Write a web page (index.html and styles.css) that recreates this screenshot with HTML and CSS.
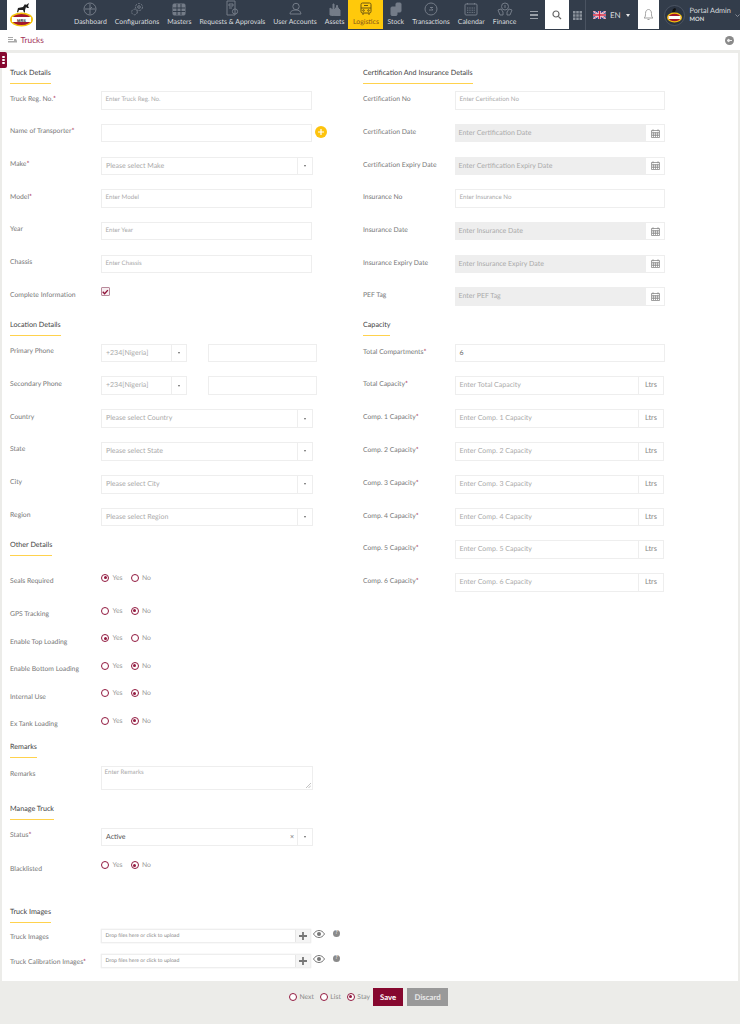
FILE: index.html
```html
<!DOCTYPE html>
<html lang="en">
<head>
<meta charset="utf-8">
<title>Trucks</title>
<link rel="stylesheet" href="styles.css">
</head>
<body>
<header class="topbar">
  <div class="logo">
    <svg width="29" height="29" viewBox="0 0 29 29"><path d="M10 12l1-4 5-1 2-3 1 1 3-2-1 3 1 2-2 0-1-1-1 3v2.500l-1 0-1-2.500-4 0-1 2.500z" fill="#222"/><ellipse cx="14.500" cy="19.500" rx="11.500" ry="7" fill="#f4c20d"/><ellipse cx="14.500" cy="19.500" rx="9.500" ry="5.600" fill="#a3162e"/><rect x="5" y="17" width="19" height="5" fill="#fff"/><text x="14.500" y="21.500" class="logo-text" text-anchor="middle">MRS</text></svg>
  </div>
  <nav class="menu">
    <div class="menu-item"><svg width="14" height="14" viewBox="0 0 14 14" class="ico"><circle cx="7" cy="7" r="6"/><path d="M7 2v10M2 7h10M7 7l2-2"/></svg><span>Dashboard</span></div>
    <div class="menu-item"><svg width="14" height="14" viewBox="0 0 14 14" class="ico"><circle cx="9" cy="5" r="3.500" stroke-dasharray="2 1"/><circle cx="9" cy="5" r="1.300"/><circle cx="4.500" cy="10" r="2.800" stroke-dasharray="2 1"/></svg><span>Configurations</span></div>
    <div class="menu-item"><svg width="14" height="14" viewBox="0 0 14 14" class="ico ico-fill"><rect x="1" y="2" width="12" height="11" rx="1"/><path d="M1 6h12M1 9.500h12M5 2v11M9 2v11" class="ln"/></svg><span>Masters</span></div>
    <div class="menu-item"><svg width="14" height="16" viewBox="0 0 14 16" class="ico"><path d="M2 1h8v14H2z"/><path d="M4 4h4v2H4zM4 8h3"/><circle cx="10" cy="11.500" r="2.600"/></svg><span>Requests &amp; Approvals</span></div>
    <div class="menu-item"><svg width="14" height="14" viewBox="0 0 14 14" class="ico"><circle cx="8" cy="4.500" r="3.200"/><path d="M2 12c0-3 3-4 6-4s4.500 1 5 4z"/></svg><span>User Accounts</span></div>
    <div class="menu-item"><svg width="14" height="14" viewBox="0 0 14 14" class="ico ico-fill"><path d="M2 13V6l3 2V2h1v6l2-2 1-3 1 3 2 2v7z"/></svg><span>Assets</span></div>
    <div class="menu-item active"><svg width="14" height="14" viewBox="0 0 14 14" class="ico-dark"><rect x="2" y="1" width="10" height="10" rx="1.500"/><path d="M2 6h10M5 3.500h4M4 11v2M10 11v2"/><circle cx="4.500" cy="8.500" r=".8"/><circle cx="9.500" cy="8.500" r=".8"/></svg><span>Logistics</span></div>
    <div class="menu-item"><svg width="14" height="14" viewBox="0 0 14 14" class="ico ico-fill"><rect x="2" y="5" width="6" height="8.500" rx="1"/><rect x="7" y="1" width="5" height="9" rx="1"/></svg><span>Stock</span></div>
    <div class="menu-item"><svg width="14" height="14" viewBox="0 0 14 14" class="ico"><circle cx="7" cy="7" r="6"/><path d="M5 8h4l-1.500-1.500M9 5.500H6"/></svg><span>Transactions</span></div>
    <div class="menu-item"><svg width="14" height="14" viewBox="0 0 14 14" class="ico"><rect x="1" y="2" width="12" height="11" rx="1"/><path d="M3.500 1v2M10.500 1v2M3 6h8M3 8.200h8M3 10.400h8" stroke-dasharray="1 .7"/></svg><span>Calendar</span></div>
    <div class="menu-item"><svg width="16" height="14" viewBox="0 0 16 14" class="ico"><circle cx="8" cy="4.500" r="3.500"/><path d="M8 3v3M1 8l3-1 2 3v3H3zM15 8l-3-1-2 3v3h3z"/></svg><span>Finance</span></div>
  </nav>
  <div class="burger"><i></i><i></i><i></i></div>
  <div class="white-box search"><svg width="10" height="10" viewBox="0 0 10 10" class="ico-search"><circle cx="4" cy="4" r="3"/><path d="M6.300 6.300L9 9"/></svg></div>
  <div class="apps"><svg width="9" height="9" viewBox="0 0 9 9" class="apps-svg"><path d="M0 0h2.500v2.500H0zM3.250 0h2.500v2.500h-2.500zM6.500 0H9v2.500H6.500zM0 3.250h2.500v2.500H0zM3.250 3.250h2.500v2.500h-2.500zM6.500 3.250H9v2.500H6.500zM0 6.500h2.500V9H0zM3.250 6.500h2.500V9h-2.500zM6.500 6.500H9V9H6.500z"/></svg></div>
  <div class="lang">
    <svg width="13" height="8" viewBox="0 0 13 8"><rect width="13" height="8" fill="#2b3f87"/><path d="M0 0l13 8M13 0L0 8" stroke="#fff" stroke-width="1.600"/><path d="M0 0l13 8M13 0L0 8" stroke="#d0233f" stroke-width=".6"/><path d="M6.500 0v8M0 4h13" stroke="#fff" stroke-width="2.600"/><path d="M6.500 0v8M0 4h13" stroke="#d0233f" stroke-width="1.500"/></svg>
    <span>EN</span><b class="caret-white"></b>
  </div>
  <div class="white-box bell"><svg width="11" height="13" viewBox="0 0 11 13" class="ico-bell"><path d="M1 10c1.500-1 1.500-2.500 1.500-4.500C2.500 3 3.800 1.500 5.500 1.500S8.500 3 8.500 5.500c0 2 0 3.500 1.500 4.500z"/><path d="M4.500 11.500h2"/></svg></div>
  <div class="user">
    <svg width="21" height="21" viewBox="0 0 21 21" class="avatar"><circle cx="10.500" cy="10.500" r="10" fill="#2b3442" stroke="#596270" stroke-width=".7"/><path d="M8 7l1-3 2-1 1 1-1 3z" fill="#111"/><ellipse cx="10.500" cy="12.500" rx="7.500" ry="5" fill="#f4c20d"/><ellipse cx="10.500" cy="12.500" rx="6" ry="3.800" fill="#a3162e"/><rect x="4.500" y="11" width="12" height="3" fill="#fff"/></svg>
    <div class="user-text"><span class="user-name">Portal Admin</span><span class="user-org">MON</span></div>
    <svg width="5" height="3" viewBox="0 0 5 3" class="chev"><path d="M.5.500l2 2 2-2"/></svg>
  </div>
</header>

<div class="crumb">
  <svg width="9" height="6" viewBox="0 0 9 6" class="crumb-ico"><path d="M0 0h5v1H0zM0 2h5v1H0zM0 4h6V2h2l1 2v1.500H0z"/></svg>
  <span class="crumb-title">Trucks</span>
  <svg width="9" height="9" viewBox="0 0 9 9" class="crumb-back"><circle cx="4.500" cy="4.500" r="4.500" fill="#8a8a8a"/><path d="M2 4.500h5M2 4.500l2-1.500v3z" stroke="#eee" stroke-width="1" fill="#eee"/></svg>
</div>

<main class="card">
  <div class="side-tab"><i></i><i></i><i></i></div>
  <div class="col col-left">
    <section class="sec sec-truck">
      <h2 class="head">Truck Details</h2>
      <div class="row"><label>Truck Reg. No.<em>*</em></label><div class="box ph">Enter Truck Reg. No.</div></div>
      <div class="row"><label>Name of Transporter<em>*</em></label><div class="box ph"></div><span class="add"><svg width="6" height="6" viewBox="0 0 6 6"><path d="M3 0v6M0 3h6" stroke="#fff" stroke-width="1.200"/></svg></span></div>
      <div class="row"><label>Make<em>*</em></label><div class="sel"><span class="sel-text">Please select Make</span><span class="sel-arrow"><b></b></span></div></div>
      <div class="row"><label>Model<em>*</em></label><div class="box ph">Enter Model</div></div>
      <div class="row"><label>Year</label><div class="box ph">Enter Year</div></div>
      <div class="row"><label>Chassis</label><div class="box ph">Enter Chassis</div></div>
      <div class="row"><label class="label-low">Complete Information</label><span class="check"><svg width="7" height="6" viewBox="0 0 7 6"><path d="M.8 2.800l2 2L6.300 1" fill="none" stroke="#8f1238" stroke-width="1.500"/></svg></span></div>
    </section>
    <section class="sec sec-location">
      <h2 class="head">Location Details</h2>
      <div class="row row-b"><label>Primary Phone</label><div class="sel sel-phone"><span class="sel-text">+234[Nigeria]</span><span class="sel-arrow"><b></b></span></div><div class="box phone"></div></div>
      <div class="row row-b"><label>Secondary Phone</label><div class="sel sel-phone"><span class="sel-text">+234[Nigeria]</span><span class="sel-arrow"><b></b></span></div><div class="box phone"></div></div>
      <div class="row row-b"><label>Country</label><div class="sel"><span class="sel-text">Please select Country</span><span class="sel-arrow"><b></b></span></div></div>
      <div class="row row-b"><label>State</label><div class="sel"><span class="sel-text">Please select State</span><span class="sel-arrow"><b></b></span></div></div>
      <div class="row row-b"><label>City</label><div class="sel"><span class="sel-text">Please select City</span><span class="sel-arrow"><b></b></span></div></div>
      <div class="row row-b"><label>Region</label><div class="sel"><span class="sel-text">Please select Region</span><span class="sel-arrow"><b></b></span></div></div>
    </section>
    <section class="sec sec-other">
      <h2 class="head head-other">Other Details</h2>
      <div class="row-radio tall"><label>Seals Required</label><div class="radios"><span class="radio on"></span><span class="rt">Yes</span><span class="radio"></span><span class="rt">No</span></div></div>
      <div class="row-radio"><label>GPS Tracking</label><div class="radios"><span class="radio"></span><span class="rt">Yes</span><span class="radio on"></span><span class="rt">No</span></div></div>
      <div class="row-radio"><label>Enable Top Loading</label><div class="radios"><span class="radio on"></span><span class="rt">Yes</span><span class="radio"></span><span class="rt">No</span></div></div>
      <div class="row-radio"><label>Enable Bottom Loading</label><div class="radios"><span class="radio"></span><span class="rt">Yes</span><span class="radio on"></span><span class="rt">No</span></div></div>
      <div class="row-radio"><label>Internal Use</label><div class="radios"><span class="radio"></span><span class="rt">Yes</span><span class="radio on"></span><span class="rt">No</span></div></div>
      <div class="row-radio"><label>Ex Tank Loading</label><div class="radios"><span class="radio"></span><span class="rt">Yes</span><span class="radio on"></span><span class="rt">No</span></div></div>
    </section>
    <section class="sec sec-remarks">
      <h2 class="head">Remarks</h2>
      <div class="row"><label class="label-low">Remarks</label><div class="area ph">Enter Remarks<svg width="5" height="5" viewBox="0 0 5 5" class="grip"><path d="M0 5l5-5M2.500 5L5 2.500"/></svg></div></div>
    </section>
    <section class="sec sec-manage">
      <h2 class="head">Manage Truck</h2>
      <div class="row"><label>Status<em>*</em></label><div class="sel"><span class="sel-text sel-value">Active</span><span class="sel-x">×</span><span class="sel-arrow"><b></b></span></div></div>
      <div class="row-radio"><label>Blacklisted</label><div class="radios"><span class="radio"></span><span class="rt">Yes</span><span class="radio on"></span><span class="rt">No</span></div></div>
    </section>
    <section class="sec sec-images">
      <h2 class="head head-images">Truck Images</h2>
      <div class="row-up"><label>Truck Images</label><div class="upload"><span class="drop">Drop files here or click to upload</span><span class="plus"><svg width="8" height="8" viewBox="0 0 8 8"><path d="M4 0v8M0 4h8" stroke="#777" stroke-width="1.800"/></svg></span></div><svg width="12" height="8" viewBox="0 0 12 8" class="eye"><path d="M.5 4C2 1.500 4 .5 6 .5S10 1.500 11.500 4C10 6.500 8 7.500 6 7.500S2 6.500.5 4z" fill="none" stroke="#777" stroke-width="1"/><circle cx="6" cy="4" r="2" fill="#777"/></svg><span class="help">?</span></div>
      <div class="row-up"><label>Truck Calibration Images<em>*</em></label><div class="upload"><span class="drop">Drop files here or click to upload</span><span class="plus"><svg width="8" height="8" viewBox="0 0 8 8"><path d="M4 0v8M0 4h8" stroke="#777" stroke-width="1.800"/></svg></span></div><svg width="12" height="8" viewBox="0 0 12 8" class="eye"><path d="M.5 4C2 1.500 4 .5 6 .5S10 1.500 11.500 4C10 6.500 8 7.500 6 7.500S2 6.500.5 4z" fill="none" stroke="#777" stroke-width="1"/><circle cx="6" cy="4" r="2" fill="#777"/></svg><span class="help">?</span></div>
    </section>
  </div>

  <div class="col col-right">
    <section class="sec sec-truck">
      <h2 class="head">Certification And Insurance Details</h2>
      <div class="row"><label>Certification No</label><div class="box ph">Enter Certification No</div></div>
      <div class="row"><label>Certification Date</label><div class="date"><span class="date-text">Enter Certification Date</span><span class="cal"><svg width="9" height="9" viewBox="0 0 9 9"><use href="#cal-ico"/></svg></span></div></div>
      <div class="row"><label>Certification Expiry Date</label><div class="date"><span class="date-text">Enter Certification Expiry Date</span><span class="cal"><svg width="9" height="9" viewBox="0 0 9 9"><use href="#cal-ico"/></svg></span></div></div>
      <div class="row"><label>Insurance No</label><div class="box ph">Enter Insurance No</div></div>
      <div class="row"><label>Insurance Date</label><div class="date"><span class="date-text">Enter Insurance Date</span><span class="cal"><svg width="9" height="9" viewBox="0 0 9 9"><use href="#cal-ico"/></svg></span></div></div>
      <div class="row"><label>Insurance Expiry Date</label><div class="date"><span class="date-text">Enter Insurance Expiry Date</span><span class="cal"><svg width="9" height="9" viewBox="0 0 9 9"><use href="#cal-ico"/></svg></span></div></div>
      <div class="row"><label>PEF Tag</label><div class="date"><span class="date-text">Enter PEF Tag</span><span class="cal"><svg width="9" height="9" viewBox="0 0 9 9"><use href="#cal-ico"/></svg></span></div></div>
    </section>
    <section class="sec">
      <h2 class="head">Capacity</h2>
      <div class="row row-b"><label>Total Compartments<em>*</em></label><div class="box val">6</div></div>
      <div class="row row-b"><label>Total Capacity<em>*</em></label><div class="unit"><span class="unit-text">Enter Total Capacity</span><span class="ltrs">Ltrs</span></div></div>
      <div class="row row-b"><label>Comp. 1 Capacity<em>*</em></label><div class="unit"><span class="unit-text">Enter Comp. 1 Capacity</span><span class="ltrs">Ltrs</span></div></div>
      <div class="row row-b"><label>Comp. 2 Capacity<em>*</em></label><div class="unit"><span class="unit-text">Enter Comp. 2 Capacity</span><span class="ltrs">Ltrs</span></div></div>
      <div class="row row-b"><label>Comp. 3 Capacity<em>*</em></label><div class="unit"><span class="unit-text">Enter Comp. 3 Capacity</span><span class="ltrs">Ltrs</span></div></div>
      <div class="row row-b"><label>Comp. 4 Capacity<em>*</em></label><div class="unit"><span class="unit-text">Enter Comp. 4 Capacity</span><span class="ltrs">Ltrs</span></div></div>
      <div class="row row-b"><label>Comp. 5 Capacity<em>*</em></label><div class="unit"><span class="unit-text">Enter Comp. 5 Capacity</span><span class="ltrs">Ltrs</span></div></div>
      <div class="row row-b"><label>Comp. 6 Capacity<em>*</em></label><div class="unit"><span class="unit-text">Enter Comp. 6 Capacity</span><span class="ltrs">Ltrs</span></div></div>
    </section>
  </div>
</main>

<footer class="actions">
  <span class="radio"></span><span class="rt rt-foot">Next</span>
  <span class="radio"></span><span class="rt rt-foot">List</span>
  <span class="radio on"></span><span class="rt rt-foot">Stay</span>
  <span class="btn btn-save">Save</span>
  <span class="btn btn-discard">Discard</span>
</footer>

<svg width="0" height="0" class="defs"><defs><g id="cal-ico"><path d="M.5 1.500h8v7h-8zM2 .3v2M7 .3v2" fill="none" stroke="#888" stroke-width=".8"/><path d="M1 3.500h7M1 5h7M1 6.500h7M2.500 3.500v4.500M4.500 3.500v4.500M6.500 3.500v4.500" stroke="#888" stroke-width=".7"/></g></defs></svg>
</body>
</html>
```
FILE: styles.css
```css
* { box-sizing: border-box; }
html, body { margin: 0; padding: 0; }
body {
  width: 740px;
  height: 1024px;
  overflow: hidden;
  background: #ecece9;
  font-family: Lato, "Open Sans", sans-serif;
  color: #777;
  text-rendering: geometricPrecision;
}

/* top bar */
.topbar {
  display: flex;
  align-items: stretch;
  height: 30px;
  background: #333d4b;
}
.logo {
  width: 29px;
  margin-left: 7px;
  background: #fff;
}
.logo svg { display: block; }
.logo-text { font: 700 4px "Liberation Sans", sans-serif; fill: #222; }
.menu {
  display: flex;
  margin-left: 34px;
}
.menu-item {
  display: flex;
  flex-direction: column;
  align-items: center;
  justify-content: flex-end;
  padding: 0 4px 2.500px;
  height: 29px;
  font-size: 6.900px;
  line-height: 9px;
  color: #d9dcdf;
  white-space: nowrap;
}
.menu-item svg { margin-bottom: 1.500px; }
.ico { fill: none; stroke: #747c88; stroke-width: 1; }
.ico-fill { fill: #747c88; }
.ico-fill .ln { stroke: #333d4b; }
.ico-dark { fill: none; stroke: #6b5510; stroke-width: 1; }
.menu-item.active {
  background: #ffc90b;
  color: #86551c;
  padding: 0 4.500px 2.500px;
}
.burger {
  display: flex;
  flex-direction: column;
  justify-content: center;
  gap: 2px;
  width: 8px;
  margin: 0 7px 0 auto;
}
.burger i { display: block; height: 1.300px; background: #9aa0a8; }
.white-box {
  display: flex;
  align-items: center;
  justify-content: center;
  background: #fff;
  height: 29px;
}
.search { width: 24px; }
.ico-search { fill: none; stroke: #666; stroke-width: 1.200; }
.apps {
  display: flex;
  align-items: center;
  justify-content: center;
  width: 17px;
  border-right: 1px solid #4a5361;
}
.apps-svg { fill: #8a919b; }
.lang {
  display: flex;
  align-items: center;
  width: 52px;
  padding-left: 7px;
  font-size: 8px;
  color: #d9dcdf;
}
.lang span { margin-left: 4px; }
.caret-white {
  margin-left: 5px;
  border: 2.500px solid transparent;
  border-top: 3px solid #e8e8e8;
  border-bottom: 0;
}
.bell { width: 21px; }
.ico-bell { fill: none; stroke: #999; stroke-width: .9; }
.user {
  display: flex;
  align-items: center;
  width: 81px;
  padding-left: 5px;
}
.avatar { flex: none; }
.user-text {
  display: flex;
  flex-direction: column;
  margin-left: 4.500px;
  line-height: 9px;
  white-space: nowrap;
}
.user-name { font-size: 7.300px; color: #d9dcdf; }
.user-org { font-size: 5.800px; font-weight: 700; color: #d9dcdf; }
.chev { margin-left: 4px; fill: none; stroke: #9aa0a8; stroke-width: .8; flex: none; }

/* breadcrumb */
.crumb {
  display: flex;
  align-items: center;
  height: 20px;
  padding: 0 6px 0 8px;
  background: #fff;
}
.crumb-ico { fill: #aaa; }
.crumb-title {
  margin-left: 3.500px;
  font-size: 8.300px;
  color: #a3335a;
  flex: 1;
}

/* card */
.card {
  position: relative;
  display: flex;
  height: 928px;
  margin: 3px 2px 0;
  padding: 14.600px 0 0 8px;
  background: #fff;
}
.side-tab {
  position: absolute;
  left: -2px;
  top: -1px;
  display: flex;
  flex-direction: column;
  align-items: center;
  justify-content: center;
  gap: 1.200px;
  width: 7px;
  height: 16px;
  background: #86082f;
  border-radius: 0 2px 2px 0;
}
.side-tab i { display: block; width: 2.200px; height: 2.200px; border-radius: 50%; background: #fff; }
.col-left { width: 353px; flex: none; }
.col-right { width: 320px; flex: none; }
.sec-truck { height: 252.400px; }
.sec-location { height: 220.500px; }
.sec-other { height: 201.500px; }
.sec-remarks { height: 62px; }
.sec-manage { height: 103px; }

.head {
  display: table;
  margin: 0 0 7.600px;
  padding-bottom: 5px;
  height: 16px;
  line-height: 10px;
  font-size: 7.200px;
  font-weight: 400;
  color: #444;
  border-bottom: 1px solid #ffd24d;
}
.head-other { margin-bottom: 16.500px; }
.head-images { margin-bottom: 6px; }

.row { display: flex; height: 32.700px; }
.row-b { height: 32.800px; }
.col-left label, .col-right label { flex: none; font-size: 6.800px; line-height: 10px; padding-top: 2.500px; color: #777; }
.col-left label { width: 91px; }
.col-right label { width: 92px; padding-top: 3px; }
label em { font-style: normal; color: #a3163f; font-size: 7px; }
.label-low { padding-top: 2.500px; }
.col-left .sec-remarks label { padding-top: 3.500px; }

.box {
  width: 211px;
  height: 18.500px;
  border: 1px solid #eee;
  background: #fff;
}
.col-right .box { width: 210px; }
.ph {
  padding-left: 3.500px;
  font-size: 6.200px;
  line-height: 16.500px;
  color: #aaa;
}
.val { padding-left: 3.500px; font-size: 7px; line-height: 16.500px; color: #666; }
.add {
  display: flex;
  align-items: center;
  justify-content: center;
  width: 12px;
  height: 12px;
  margin: 2.500px 0 0 3px;
  border-radius: 50%;
  background: #fdc30e;
}
.sel {
  display: flex;
  width: 212px;
  height: 18.800px;
  border: 1px solid #eee;
  background: #fff;
}
.sel-text {
  flex: 1;
  padding-left: 4px;
  font-size: 7px;
  line-height: 16.800px;
  color: #aaa;
}
.sel-value { color: #555; }
.sel-x { width: 10px; padding-left: 3px; font-size: 7px; line-height: 16.800px; color: #777; }
.sel-arrow {
  display: flex;
  align-items: center;
  justify-content: center;
  width: 15px;
  border-left: 1px solid #eee;
}
.sel-arrow b { border: 1.800px solid transparent; border-top: 2px solid #666; border-bottom: 0; }
.sel-phone { width: 85.500px; margin-right: 21.500px; }
.phone { width: 109px; }

.check {
  display: flex;
  align-items: center;
  justify-content: center;
  width: 8.500px;
  height: 8.500px;
  border: 1px solid #b98a9b;
  background: #f7eef1;
  border-radius: 1px;
}

.date {
  display: flex;
  width: 210px;
  height: 18.500px;
  background: #eee;
}
.date-text { flex: 1; padding-left: 3.500px; font-size: 7px; line-height: 18.500px; color: #aaa; }
.cal {
  display: flex;
  align-items: center;
  justify-content: center;
  width: 20px;
  background: #fff;
  border: 1px solid #eee;
}
.unit {
  display: flex;
  width: 209px;
  height: 18.800px;
  border: 1px solid #eee;
}
.unit-text { flex: 1; padding-left: 3.500px; font-size: 7px; line-height: 16.800px; color: #aaa; }
.ltrs {
  width: 25px;
  text-align: center;
  font-size: 7.500px;
  line-height: 16.800px;
  color: #888;
  border-left: 1px solid #eee;
}

/* radios */
.row-radio { display: flex; height: 27.500px; padding-top: 1px; }
.row-radio.tall { height: 33px; }
.radios { display: flex; align-items: center; height: 8px; }
.radio {
  display: inline-flex;
  align-items: center;
  justify-content: center;
  flex: none;
  width: 8px;
  height: 8px;
  border: 1.300px solid #92193f;
  border-radius: 50%;
  background: #fff;
}
.radio.on::after {
  content: "";
  width: 3px;
  height: 3px;
  border-radius: 50%;
  background: #92193f;
}
.rt { margin-left: 3.500px; margin-right: 9px; font-size: 6.800px; line-height: 8px; color: #999; }
.radios .rt:nth-child(2) { width: 10.500px; margin-right: 7.500px; }

.area {
  position: relative;
  width: 212px;
  height: 24px;
  padding-left: 2.500px;
  border: 1px solid #eee;
  line-height: 12px;
}
.grip {
  position: absolute;
  right: 1px;
  bottom: 1px;
  fill: none;
  stroke: #999;
  stroke-width: .6;
}

/* uploads */
.row-up { display: flex; height: 25px; }
.col-left .row-up label { padding-top: 3px; }
.upload {
  display: flex;
  width: 210px;
  height: 14.500px;
  border: 1px solid #eee;
  box-shadow: 0 0 1px #ddd;
}
.drop { flex: 1; padding-left: 3.500px; font-size: 5.200px; line-height: 12.500px; color: #888; }
.plus {
  display: flex;
  align-items: center;
  justify-content: center;
  width: 15px;
  background: #f5f5f5;
  border-left: 1px solid #e6e6e6;
}
.eye { margin: 1px 0 0 1.500px; flex: none; }
.help {
  width: 7px;
  height: 7px;
  margin: 1.500px 0 0 8.500px;
  border-radius: 50%;
  background: #8a8a8a;
  color: #fff;
  font-size: 5.500px;
  line-height: 7px;
  text-align: center;
}

/* footer */
.actions {
  display: flex;
  align-items: center;
  justify-content: center;
  height: 43px;
  padding: 0 0 12px 0;
  margin-left: -3px;
}
.rt-foot { margin-left: 2.500px; margin-right: 6px; font-size: 6.800px; color: #888; }
.btn {
  display: block;
  height: 18px;
  line-height: 18px;
  text-align: center;
  font-size: 7.800px;
  font-weight: 700;
  color: #fff;
}
.btn-save { width: 30px; background: #86082f; margin-left: -3px; }
.btn-discard { width: 41px; margin-left: 4px; background: #999; color: #e8e8e8; }

.defs { position: absolute; }
```
